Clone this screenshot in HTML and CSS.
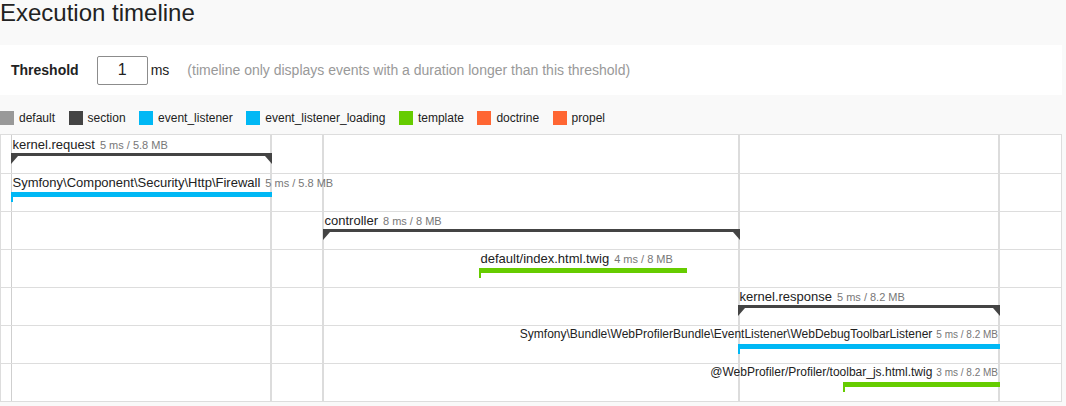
FILE: index.html
```html
<!DOCTYPE html>
<html lang="en">
<head>
<meta charset="utf-8">
<title>Execution timeline</title>
<link rel="stylesheet" href="styles.css">
</head>
<body>
<h2 class="title">Execution timeline</h2>

<form class="threshold">
  <label class="threshold-label" for="threshold">Threshold</label>
  <input class="threshold-input" id="threshold" type="text" value="1">
  <span class="threshold-unit">ms</span>
  <span class="threshold-help">(timeline only displays events with a duration longer than this threshold)</span>
</form>

<ul class="legend">
  <li class="legend-item"><span class="swatch swatch-default"></span>default</li>
  <li class="legend-item"><span class="swatch swatch-section"></span>section</li>
  <li class="legend-item"><span class="swatch swatch-listener"></span>event_listener</li>
  <li class="legend-item"><span class="swatch swatch-listener"></span>event_listener_loading</li>
  <li class="legend-item"><span class="swatch swatch-template"></span>template</li>
  <li class="legend-item"><span class="swatch swatch-doctrine"></span>doctrine</li>
  <li class="legend-item"><span class="swatch swatch-doctrine"></span>propel</li>
</ul>

<div class="timeline">
  <div class="gridline gridline-thin" style="left:10px"></div>
  <div class="gridline" style="left:269px"></div>
  <div class="gridline" style="left:321px"></div>
  <div class="gridline" style="left:737px"></div>
  <div class="gridline" style="left:997px"></div>

  <div class="row">
    <div class="event event--section" style="left:10px;width:261px">
      <div class="event-label"><span class="event-name">kernel.request</span><span class="event-meta">5 ms / 5.8 MB</span></div>
      <div class="event-bar"></div>
    </div>
  </div>
  <div class="row">
    <div class="event event--listener" style="left:10px;width:261px">
      <div class="event-label"><span class="event-name">Symfony\Component\Security\Http\Firewall</span><span class="event-meta">5 ms / 5.8 MB</span></div>
      <div class="event-bar"></div>
    </div>
  </div>
  <div class="row">
    <div class="event event--section" style="left:322px;width:417px">
      <div class="event-label"><span class="event-name">controller</span><span class="event-meta">8 ms / 8 MB</span></div>
      <div class="event-bar"></div>
    </div>
  </div>
  <div class="row">
    <div class="event event--template" style="left:478px;width:208px">
      <div class="event-label"><span class="event-name">default/index.html.twig</span><span class="event-meta">4 ms / 8 MB</span></div>
      <div class="event-bar"></div>
    </div>
  </div>
  <div class="row">
    <div class="event event--section" style="left:737px;width:262px">
      <div class="event-label"><span class="event-name">kernel.response</span><span class="event-meta">5 ms / 8.2 MB</span></div>
      <div class="event-bar"></div>
    </div>
  </div>
  <div class="row">
    <div class="event event--listener event--end" style="left:737px;width:262px">
      <div class="event-label"><span class="event-name">Symfony\Bundle\WebProfilerBundle\EventListener\WebDebugToolbarListener</span><span class="event-meta">5 ms / 8.2 MB</span></div>
      <div class="event-bar"></div>
    </div>
  </div>
  <div class="row">
    <div class="event event--template event--end" style="left:842px;width:157px">
      <div class="event-label"><span class="event-name">@WebProfiler/Profiler/toolbar_js.html.twig</span><span class="event-meta">3 ms / 8.2 MB</span></div>
      <div class="event-bar"></div>
    </div>
  </div>
</div>
</body>
</html>
```

FILE: styles.css
```css
* {
  box-sizing: border-box;
}

body {
  margin: 0;
  background: #f9f9f9;
  font-family: "Liberation Sans", Arial, Helvetica, sans-serif;
  color: #222;
}

.title {
  margin: 0 0 19px 0;
  font-size: 24px;
  line-height: 26px;
  font-weight: normal;
  color: #222;
}

/* threshold form */
.threshold {
  display: flex;
  align-items: center;
  width: 1062px;
  height: 50px;
  margin: 0;
  padding: 0 11px;
  background: #fff;
}

.threshold-label {
  font-size: 14px;
  font-weight: bold;
  color: #222;
}

.threshold-input {
  width: 51px;
  height: 29px;
  margin: 0 0 0 18px;
  padding: 0;
  border: 1px solid #8c8c8c;
  border-radius: 2px;
  background: #fff;
  font-family: "Liberation Sans", Arial, sans-serif;
  font-size: 16px;
  color: #222;
  text-align: center;
}

.threshold-unit {
  margin-left: 3px;
  font-size: 14px;
  color: #222;
}

.threshold-help {
  margin-left: 18px;
  font-size: 14px;
  color: #999;
}

/* legend */
.legend {
  display: flex;
  list-style: none;
  margin: 16px 0 9px;
  padding: 0;
  height: 14px;
  font-size: 12px;
  line-height: 14px;
}

.legend-item {
  display: flex;
  align-items: center;
  margin-right: 13.5px;
  color: #222;
}

.swatch {
  width: 14px;
  height: 14px;
  margin-right: 5px;
}

.swatch-default { background: #999; }
.swatch-section { background: #444; }
.swatch-listener { background: #00b8f5; }
.swatch-template { background: #66cc00; }
.swatch-doctrine { background: #ff6633; }

/* timeline */
.timeline {
  position: relative;
  width: 1062px;
  padding-top: 1px;
  background: #fff;
  border: 1px solid #ddd;
}

.gridline {
  position: absolute;
  top: 0;
  bottom: 0;
  width: 2px;
  background: #dcdcdc;
}

.gridline-thin {
  width: 1px;
  background: #cfcfcf;
}

.row {
  position: relative;
  height: 38px;
  border-bottom: 1px solid #ddd;
}

.row:last-child {
  height: 37px;
  border-bottom: 0;
}

.event {
  position: absolute;
  top: 0;
  height: 100%;
}

.event-label {
  position: absolute;
  top: 2px;
  left: 1.5px;
  display: flex;
  align-items: baseline;
  gap: 5px;
  white-space: nowrap;
  line-height: 13px;
}

.event-name {
  font-size: 13px;
  color: #222;
}

.event-meta {
  font-size: 11px;
  color: #777;
}

/* labels that would overflow are right-aligned and shrunk */
.event--end .event-label {
  left: auto;
  right: 2px;
  gap: 4px;
}

.event--end .event-name {
  font-size: 12px;
}

.event--end .event-meta {
  font-size: 10px;
}

.event-bar {
  position: absolute;
  left: 0;
  right: 0;
  top: 18px;
  height: 5px;
  background: #999;
}

.event-bar::before {
  content: "";
  position: absolute;
  left: 0;
  top: 100%;
  width: 2px;
  height: 5px;
  background: inherit;
}

.event--listener .event-bar { background: #00b8f5; }
.event--template .event-bar { background: #66cc00; }

.event--section .event-bar {
  top: 17px;
  height: 3px;
  background: #444;
}

.event--section .event-bar::before,
.event--section .event-bar::after {
  content: "";
  position: absolute;
  top: 100%;
  width: 0;
  height: 0;
  background: none;
  border-top: 8px solid #444;
}

.event--section .event-bar::before {
  left: 0;
  border-right: 7px solid transparent;
}

.event--section .event-bar::after {
  right: 0;
  border-left: 7px solid transparent;
}
```
